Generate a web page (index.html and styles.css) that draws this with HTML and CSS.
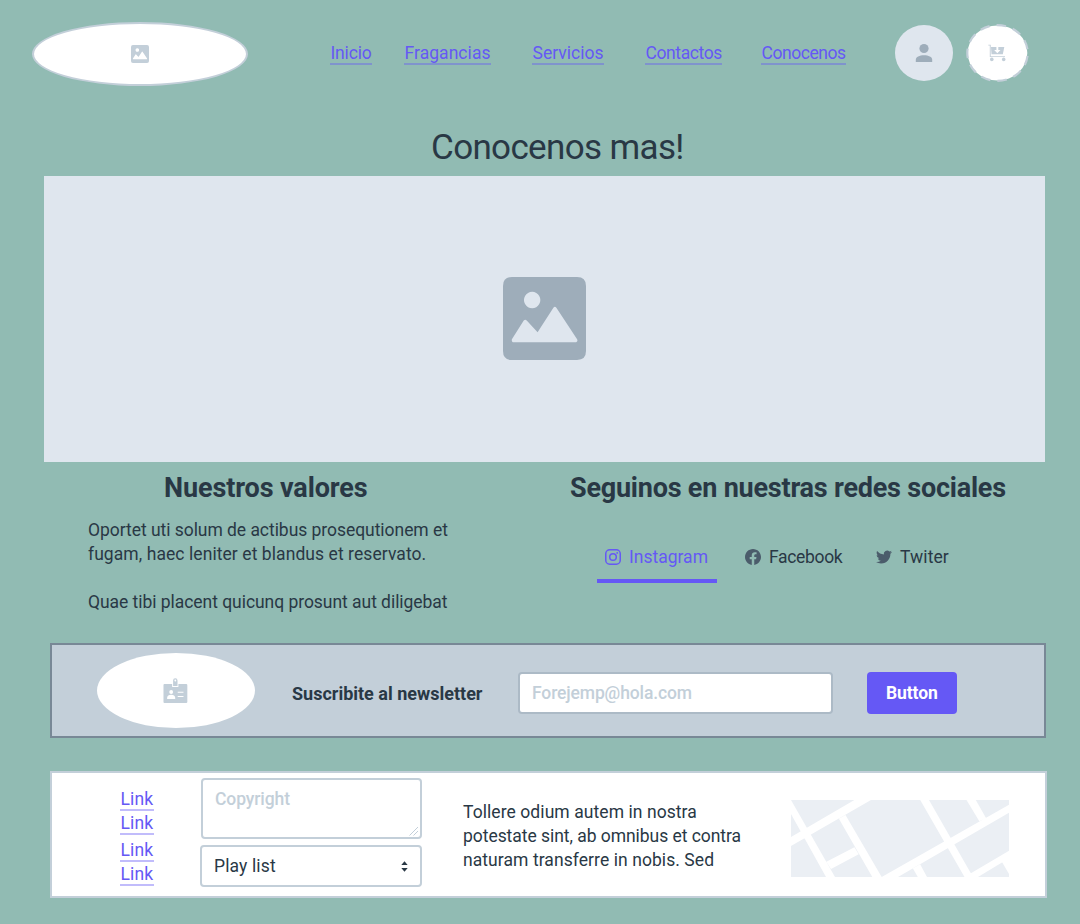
FILE: index.html
```html
<!DOCTYPE html>
<html lang="es">
<head>
<meta charset="utf-8">
<title>Conocenos mas!</title>
<link rel="stylesheet" href="styles.css">
</head>
<body>
<header class="header">
  <div class="logo">
    <svg class="logo-icon" viewBox="0 0 84 84"><path fill="#c3cfd9" fill-rule="evenodd" d="M9 0H75Q84 0 84 9V75Q84 84 75 84H9Q0 84 0 75V9Q0 0 9 0ZM29.500 15a8.300 8.300 0 1 0 .01 0ZM10 66H74Q76 65 75 63L54 31Q52.500 29 51 31L35 56 24 44Q22.500 42.500 21 44L9 63Q8.500 65.500 10 66Z"/></svg>
  </div>
  <nav class="nav">
    <a class="link nav-inicio">Inicio</a>
    <a class="link nav-fragancias">Fragancias</a>
    <a class="link nav-servicios">Servicios</a>
    <a class="link nav-contactos">Contactos</a>
    <a class="link nav-conocenos">Conocenos</a>
  </nav>
  <div class="user">
    <svg width="18" height="20" viewBox="0 0 18 20"><circle cx="9" cy="5.500" r="4.600" fill="#9eadba"/><path fill="#9eadba" d="M.8 19v-2.200C.8 13.800 4.500 12.200 9 12.200s8.200 1.600 8.200 4.600V19Z"/></svg>
  </div>
  <svg class="cart" width="65" height="60" viewBox="0 0 65 60">
    <ellipse cx="32.500" cy="30" rx="29.800" ry="27.600" fill="#fff"/>
    <ellipse cx="32.500" cy="30" rx="30.200" ry="27.900" fill="none" stroke="#c3cfd9" stroke-width="2.200" stroke-dasharray="9.500 7.100" stroke-dashoffset="-3"/>
    <g fill="#c3cfd9"><path d="M23.300 21.700H25.700V33.200H40V34.100H24.800V22.600H23.300Z"/><path d="M26 24H39.300L37.800 31.300H26.500Z"/><circle cx="26.800" cy="36.400" r="1.800"/><circle cx="38.700" cy="36.400" r="1.800"/></g>
    <path fill="#fff" d="M31.400 23.700h1.900v3.200h2.200l-3.150 3.300-3.150-3.300h2.200Z"/>
  </svg>
</header>
<h1 class="title">Conocenos mas!</h1>
<div class="hero">
  <svg class="hero-icon" viewBox="0 0 84 84"><path fill="#9eadba" fill-rule="evenodd" d="M9 0H75Q84 0 84 9V75Q84 84 75 84H9Q0 84 0 75V9Q0 0 9 0ZM29.500 15a8.300 8.300 0 1 0 .01 0ZM10 66H74Q76 65 75 63L54 31Q52.500 29 51 31L35 56 24 44Q22.500 42.500 21 44L9 63Q8.500 65.500 10 66Z"/></svg>
</div>
<main class="columns">
  <section class="values">
    <h2 class="heading">Nuestros valores</h2>
    <p class="copy">Oportet uti solum de actibus prosequtionem et<br><span class="line-loose">fugam, haec leniter et blandus et reservato.</span></p>
    <p class="copy">Quae tibi placent quicunq prosunt aut diligebat</p>
  </section>
  <section class="social">
    <h2 class="heading">Seguinos en nuestras redes sociales</h2>
    <div class="tabs">
      <a class="tab tab-active">
        <svg width="16" height="16" viewBox="0 0 16 16" fill="none" stroke="#6558f5" stroke-width="1.500"><rect x=".75" y=".75" width="14.500" height="14.500" rx="4"/><circle cx="8" cy="8" r="3.300"/><circle cx="12.200" cy="3.900" r=".9" fill="#6558f5" stroke="none"/></svg>
        <span>Instagram</span></a>
      <a class="tab tab-facebook">
        <svg width="16" height="16" viewBox="0 0 24 24" fill="#4b5c6b"><path d="M24 12.073C24 5.446 18.627.073 12 .073S0 5.446 0 12.073c0 5.990 4.388 10.954 10.125 11.854v-8.385H7.078v-3.470h3.047V9.430c0-3.007 1.792-4.669 4.533-4.669 1.312 0 2.686.235 2.686.235v2.953H15.830c-1.491 0-1.956.925-1.956 1.874v2.250h3.328l-.532 3.470h-2.796v8.385C19.612 23.027 24 18.062 24 12.073z"/></svg>
        <span>Facebook</span></a>
      <a class="tab tab-twitter">
        <svg width="16" height="16" viewBox="0 0 24 24" fill="#4b5c6b"><path d="M23.953 4.570a10 10 0 01-2.825.775 4.958 4.958 0 002.163-2.723c-.951.555-2.005.959-3.127 1.184a4.920 4.920 0 00-8.384 4.482C7.690 8.095 4.067 6.130 1.640 3.162a4.822 4.822 0 00-.666 2.475c0 1.710.870 3.213 2.188 4.096a4.904 4.904 0 01-2.228-.616v.060a4.923 4.923 0 003.946 4.827 4.996 4.996 0 01-2.212.085 4.936 4.936 0 004.604 3.417 9.867 9.867 0 01-6.102 2.105c-.390 0-.779-.023-1.170-.067a13.995 13.995 0 007.557 2.209c9.053 0 13.998-7.496 13.998-13.985 0-.210 0-.420-.015-.630A9.935 9.935 0 0024 4.590z"/></svg>
        <span>Twiter</span></a>
    </div>
  </section>
</main>
<section class="newsletter">
  <div class="badge">
    <svg width="25" height="25" viewBox="0 0 26 25" preserveAspectRatio="none"><path fill="#c3cfd9" d="M1.500 6H9.500V9H16V6H24Q25.300 6 25.300 7V24Q25.300 25 24 25H1.500Q.5 25 .5 24V7Q.5 6 1.500 6Z"/><path fill="#c3cfd9" fill-rule="evenodd" d="M10.500 8V2.500a2.300 2.300 0 0 1 4.600 0V8ZM12.800 1.600a.9.900 0 1 0 .01 0Z"/><g fill="#fff"><circle cx="8.500" cy="14" r="2"/><path d="M4.300 21v-1.300c0-2 1.800-3 4.200-3s4.200 1 4.200 3V21ZM15.300 13.800h6v1h-6zM15.300 18h6v1h-6z"/></g></svg>
  </div>
  <span class="news-label">Suscribite al newsletter</span>
  <div class="email">Forejemp@hola.com</div>
  <div class="button">Button</div>
</section>
<footer class="footer">
  <div class="footer-links">
    <a class="link">Link</a>
    <a class="link">Link</a>
    <a class="link link-gap">Link</a>
    <a class="link">Link</a>
  </div>
  <div class="fields">
    <div class="textarea">Copyright
      <svg class="grip" width="10" height="10" viewBox="0 0 10 10" stroke="#c3cfd9" stroke-width="1"><path d="M.5 9.500 9 1M4.500 9.500 9 5"/></svg>
    </div>
    <div class="select"><span>Play list</span>
      <svg width="7" height="11" viewBox="0 0 7 11" fill="#293845"><path d="M.3 4 3.500.3 6.700 4ZM.3 7 3.500 10.700 6.700 7Z"/></svg>
    </div>
  </div>
  <p class="copy footer-copy"><span class="line-loose">Tollere odium autem in nostra</span><br>potestate sint, ab omnibus et contra<br><span class="line-loose">naturam transferre in nobis. Sed</span></p>
  <svg class="map" width="218" height="77" viewBox="0 0 218 77"><path fill="#ebeff4" d="M0 0H218V77H0Z"/><path fill="#fff" d="M0 37 63.400 0H80L0 46ZM0 0 44 77H35L0 14ZM35.400 61.700 63.400 47.300 67.700 54.300 40 69ZM47.900 18.700 54.500 15 90.700 77H81.300ZM90.700 77 218 4.700V12.700L107 77ZM129.200 0H138L182 77H173.500ZM175.500 0H184.800L195 18 188.300 21.300ZM173.500 77 218 50.700V58.300L187 77ZM126.800 77H136L129 64 121.800 68.300ZM211 62 218 58V74Z"/></svg>
</footer>
</body>
</html>
```
FILE: styles.css
```css
* { box-sizing: border-box; }

body {
  margin: 0;
  width: 1080px;
  height: 924px;
  overflow: hidden;
  background: #91bbb3;
  color: #293845;
  font-family: Roboto, "Liberation Sans", sans-serif;
  font-size: 17.5px;
  line-height: 24px;
  white-space: nowrap;
}

h1, h2, p { margin: 0; }

svg { flex-shrink: 0; }

.header {
  display: flex;
  align-items: flex-start;
  height: 127px;
  padding: 22px 0 0 32px;
}

.logo {
  display: flex;
  align-items: center;
  justify-content: center;
  width: 216px;
  height: 64px;
  border: 2px solid #c3cfd9;
  border-radius: 50%;
  background: #fff;
}

.logo-icon { width: 18px; height: 18px; }

.nav {
  display: flex;
  width: 598px;
  padding: 19px 0 0 82px;
}

.link {
  display: block;
  height: 24px;
  padding-left: 0.5px;
  border-bottom: 2px solid rgba(101, 88, 245, 0.4);
  color: #6558f5;
}

.nav-inicio { width: 42px; letter-spacing: -0.15px; }
.nav-fragancias { width: 87px; margin-left: 32px; letter-spacing: 0.05px; }
.nav-servicios { width: 72px; margin-left: 41px; }
.nav-contactos { width: 77px; margin-left: 41px; letter-spacing: -0.4px; }
.nav-conocenos { width: 85px; margin-left: 39px; letter-spacing: -0.46px; }

.user {
  display: flex;
  align-items: center;
  justify-content: center;
  width: 58px;
  height: 56px;
  margin: 3px 0 0 49px;
  border-radius: 50%;
  background: #dfe6ee;
}

.cart { margin: 1px 0 0 12px; }

.title {
  height: 49px;
  padding-left: 431px;
  font-size: 35px;
  font-weight: 400;
  line-height: 41px;
  letter-spacing: -0.65px;
}

.hero {
  display: flex;
  align-items: center;
  justify-content: center;
  width: 1001px;
  height: 286px;
  margin-left: 44px;
  padding-bottom: 1px;
  background: #dfe6ee;
}

.hero-icon { width: 83px; height: 83px; }

.columns { display: flex; height: 181px; }

.values { width: 570px; padding-left: 88px; }

.heading {
  height: 56px;
  padding-top: 10px;
  font-size: 27px;
  font-weight: 700;
  line-height: 32px;
  letter-spacing: -0.22px;
}

.values .heading { padding-left: 76px; letter-spacing: -0.12px; }

.copy { margin-bottom: 24px; letter-spacing: -0.045px; }

.line-loose { letter-spacing: 0.07px; }

.tabs {
  display: flex;
  margin: 13px 0 0 27px;
}

.tab {
  display: flex;
  align-items: center;
  gap: 8px;
  height: 52px;
  padding: 0 8px;
}

.tab-active {
  width: 120px;
  border-bottom: 4px solid #6558f5;
  border-top: 4px solid transparent;
  color: #6558f5;
}

.tab-facebook { width: 117px; margin-left: 20px; letter-spacing: -0.33px; }
.tab-twitter { margin-left: 14px; letter-spacing: 0.1px; }

.newsletter {
  display: flex;
  align-items: center;
  width: 996px;
  height: 95px;
  margin-left: 50px;
  border: 2px solid #788896;
  background: #c3cfd9;
}

.badge {
  display: flex;
  align-items: center;
  justify-content: center;
  width: 158px;
  height: 75px;
  margin-left: 45px;
  padding-right: 1px;
  border-radius: 50%;
  background: #fff;
}

.news-label {
  width: 226px;
  margin: 6px 0 0 37px;
  font-size: 18px;
  font-weight: 700;
}

.email {
  width: 315px;
  height: 42px;
  margin-top: 4px;
  padding: 7px 12px;
  border: 2px solid #acbac6;
  border-radius: 4px;
  background: #fff;
  color: #c3cfd9;
  font-weight: 500;
  letter-spacing: -0.13px;
}

.button {
  width: 90px;
  height: 42px;
  margin: 4px 0 0 34px;
  padding: 9px 19px;
  border-radius: 4px;
  background: #6558f5;
  color: #fff;
  font-weight: 700;
  letter-spacing: -0.1px;
}

.footer {
  display: flex;
  width: 997px;
  height: 127px;
  margin: 33px 0 0 50px;
  border: 2px solid #c3cfd9;
  background: #fff;
}

.footer-links { width: 34px; margin: 14px 0 0 68px; letter-spacing: 0.15px; }
.link-gap { margin-top: 3px; }

.fields { width: 222px; margin: 5px 0 0 46px; }

.textarea {
  position: relative;
  width: 221px;
  height: 61px;
  margin-left: 1px;
  padding: 7px 12px;
  border: 2px solid #c3cfd9;
  border-radius: 4px;
  color: #c3cfd9;
  font-weight: 500;
  letter-spacing: -0.1px;
}

.grip { position: absolute; right: 1px; bottom: 1px; }

.select {
  display: flex;
  align-items: center;
  justify-content: space-between;
  height: 42px;
  margin-top: 6px;
  padding: 0 12px;
  border: 2px solid #c3cfd9;
  border-radius: 4px;
  letter-spacing: 0.13px;
}

.footer-copy { width: 328px; margin: 27px 0 0 41px; }

.map { margin-top: 27px; }
```
